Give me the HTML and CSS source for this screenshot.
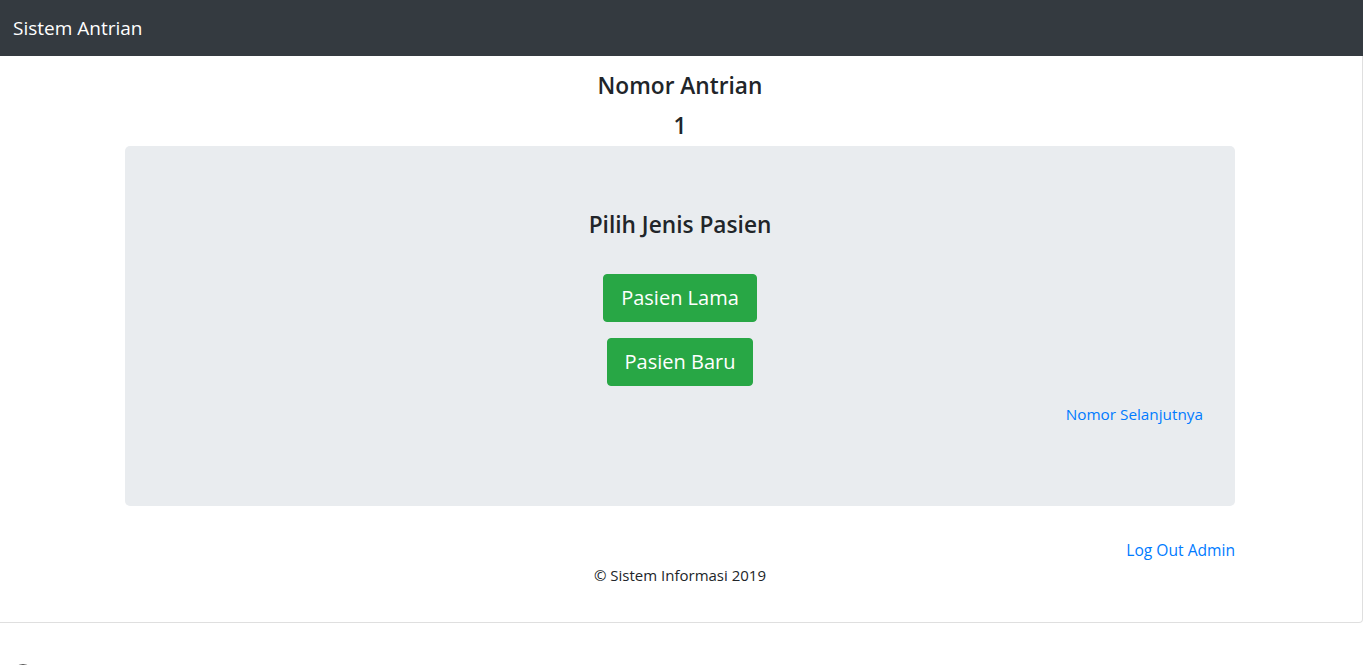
FILE: index.html
```html
<!DOCTYPE html>
<html lang="id">
<head>
<meta charset="utf-8">
<title>Sistem Antrian</title>
<link rel="stylesheet" href="styles.css">
</head>
<body>
<nav class="navbar">
  <a class="brand" href="#">Sistem Antrian</a>
</nav>
<div class="card">
  <div class="card-body">
    <h4 class="title">Nomor Antrian</h4>
    <h4 class="number">1</h4>
    <div class="container">
      <div class="jumbotron">
        <h4 class="pick">Pilih Jenis Pasien</h4>
        <div class="buttons">
          <a class="btn" href="#">Pasien Lama</a>
          <a class="btn btn-baru" href="#">Pasien Baru</a>
        </div>
        <p class="next"><a href="#">Nomor Selanjutnya</a></p>
      </div>
      <p class="logout"><a href="#">Log Out Admin</a></p>
      <p class="copy">© Sistem Informasi 2019</p>
    </div>
  </div>
</div>
<footer class="foot">
  <svg class="foot-icon" width="22" height="22" viewBox="0 0 22 22"><circle cx="11" cy="11" r="9.5" fill="none" stroke="#555" stroke-width="1.2"/><circle cx="11" cy="11" r="6.5" fill="none" stroke="#888" stroke-width="1"/></svg>
</footer>
</body>
</html>
```
FILE: styles.css
```css
* { box-sizing: border-box; }
html, body { margin: 0; }
body {
  font-family: "Open Sans", "Noto Sans", sans-serif;
  font-size: 16px;
  line-height: 1.5;
  color: #212529;
  background: #fff;
}
a { color: #007bff; text-decoration: none; }
.navbar {
  height: 56px;
  background: #343a40;
  display: flex;
  align-items: center;
  padding: 0 13px;
}
.brand {
  color: #fff;
  font-size: 19px;
  line-height: 30px;
}
.card {
  border-right: 1px solid rgba(0,0,0,.125);
  border-bottom: 1px solid rgba(0,0,0,.125);
  border-bottom-right-radius: 4px;
  width: 1363px;
}
.card-body {
  padding: 15px 2px 35px 0;
}
h4 {
  margin: 0;
  font-size: 22.7px;
  font-weight: 600;
  line-height: 29px;
  text-align: center;
}
.title { margin-bottom: 11px; }
.number { margin-bottom: 6px; }
.container {
  width: 1110px;
  margin: 0 auto;
}
.jumbotron {
  background: #e9ecef;
  border-radius: 5px;
  padding: 64px 32px;
}
.pick { margin-bottom: 35px; }
.buttons {
  display: flex;
  flex-direction: column;
  align-items: center;
  gap: 16px;
}
.btn {
  display: inline-block;
  background: #28a745;
  color: #fff;
  border: 1px solid #28a745;
  border-radius: 4px;
  font-size: 20px;
  line-height: 30px;
  padding: 8px 17px;
}
.next {
  margin: 17px 0 16px;
  text-align: right;
  font-size: 15.3px;
}
.logout {
  margin: 32px 0 0;
  text-align: right;
  font-size: 15.6px;
  line-height: 24px;
}
.copy {
  margin: 1px 0 0;
  text-align: center;
  font-size: 15px;
  line-height: 24px;
}
.foot {
  padding: 40px 0 0 12px;
}
.foot-icon { display: block; }
```
